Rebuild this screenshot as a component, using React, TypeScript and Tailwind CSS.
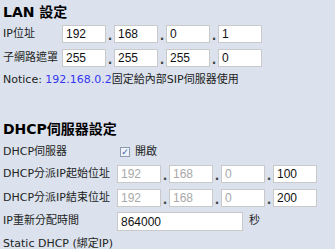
import React from "react";

const font = { fontFamily: '"DejaVu Sans", "Noto Sans CJK TC", sans-serif' };

const IpBox = ({ value, disabled }: { value: string; disabled?: boolean }) => (
  <input
    readOnly
    value={value}
    className={
      "w-[44px] h-[18px] border border-[#c9c9c9] bg-white px-[3px] text-[12px] outline-none font-['Liberation_Sans',sans-serif] " +
      (disabled ? "text-[#a8a8a8]" : "text-[#111]")
    }
  />
);

const Dot = () => <span className="w-[8px] self-end text-center text-[12px] font-bold leading-[14px] text-[#444]">.</span>;

const IpRow = ({ values, disabled = [] }: { values: string[]; disabled?: boolean[] }) => (
  <div className="flex items-center">
    {values.map((v, i) => (
      <React.Fragment key={i}>
        {i > 0 && <Dot />}
        <IpBox value={v} disabled={disabled[i]} />
      </React.Fragment>
    ))}
  </div>
);

export default function App() {
  return (
    <div className="w-[335px] h-[249px] overflow-hidden bg-[#dbe2ed] px-[3px] text-[11px] text-[#222]" style={font}>
      <h2 className="h-[22px] pt-[3px] text-[14px] font-bold leading-[18px] text-black">LAN 設定</h2>

      <div className="flex h-[24px] items-center">
        <span className="w-[59px]">IP位址</span>
        <IpRow values={["192", "168", "0", "1"]} />
      </div>
      <div className="flex h-[24px] items-center">
        <span className="w-[59px]">子網路遮罩</span>
        <IpRow values={["255", "255", "255", "0"]} />
      </div>
      <div className="flex h-[20px] items-center">
        Notice:&nbsp;<span className="text-[#3535f0]">192.168.0.2</span>固定給內部SIP伺服器使用
      </div>

      <h2 className="mt-[30px] h-[22px] text-[14px] font-bold leading-[18px] text-black">DHCP伺服器設定</h2>

      <div className="flex h-[20px] items-center">
        <span className="w-[114px]">DHCP伺服器</span>
        <span className="ml-[3px] flex h-[10px] w-[10px] items-center justify-center border border-[#8c9bb0] bg-[#eef2f8] text-[9px] leading-none text-[#3d5fa8]">✓</span>
        <span className="ml-[5px]">開啟</span>
      </div>
      <div className="flex h-[24px] items-center">
        <span className="w-[114px]">DHCP分派IP起始位址</span>
        <IpRow values={["192", "168", "0", "100"]} disabled={[true, true, true, false]} />
      </div>
      <div className="flex h-[24px] items-center">
        <span className="w-[114px]">DHCP分派IP結束位址</span>
        <IpRow values={["192", "168", "0", "200"]} disabled={[true, true, true, false]} />
      </div>
      <div className="flex h-[23px] items-center">
        <span className="w-[114px]">IP重新分配時間</span>
        <input
          readOnly
          value="864000"
          className="h-[19px] w-[126px] border border-[#c9c9c9] bg-white px-[3px] text-[12px] text-[#111] outline-none font-['Liberation_Sans',sans-serif]"
        />
        <span className="ml-[6px]">秒</span>
      </div>
      <div className="flex h-[22px] items-center">Static DHCP (綁定IP)</div>
    </div>
  );
}
